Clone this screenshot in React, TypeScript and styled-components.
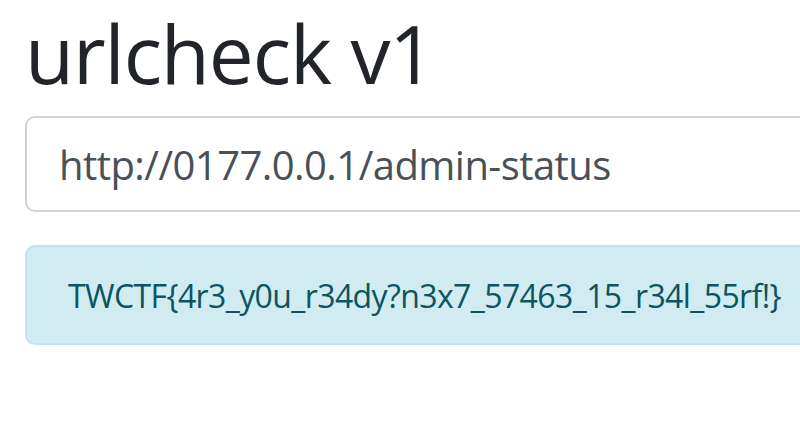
import React from "react";
import styled, { createGlobalStyle } from "styled-components";

const Global = createGlobalStyle`
  html, body { margin: 0; padding: 0; background: #fff; overflow: hidden; }
  body { font-family: "Open Sans", "Noto Sans", sans-serif; color: #212529; }
`;

const Container = styled.main`
  width: 900px;
  padding: 5px 0 0 25px;
  box-sizing: border-box;
`;

const Title = styled.h1`
  margin: 0 0 15px 0;
  font-size: 80px;
  line-height: 96px;
  font-weight: 400;
  letter-spacing: -1.1px;
  color: #212529;
`;

const Form = styled.form`
  margin: 0 0 33px 0;
`;

const UrlInput = styled.input`
  display: block;
  width: 100%;
  height: 96px;
  box-sizing: border-box;
  padding: 16px 32px;
  font-family: "Open Sans", "Noto Sans", sans-serif;
  font-size: 40px;
  line-height: 60px;
  letter-spacing: -0.55px;
  color: #495057;
  background: #fff;
  border: 2px solid #ced4da;
  border-radius: 10px;
  outline: none;
`;

const Alert = styled.div`
  box-sizing: border-box;
  padding: 25px 41px 23px;
  font-size: 32px;
  line-height: 48px;
  letter-spacing: -0.6px;
  color: #0c5460;
  background: #d1ecf1;
  border: 2px solid #bee5eb;
  border-radius: 10px;
`;

export default function App() {
  return (
    <>
      <Global />
      <Container>
        <Title>urlcheck v1</Title>
        <Form onSubmit={(e) => e.preventDefault()}>
          <UrlInput type="text" defaultValue="http://0177.0.0.1/admin-status" />
        </Form>
        <Alert>TWCTF{"{"}4r3_y0u_r34dy?n3x7_57463_15_r34l_55rf!{"}"}</Alert>
      </Container>
    </>
  );
}
